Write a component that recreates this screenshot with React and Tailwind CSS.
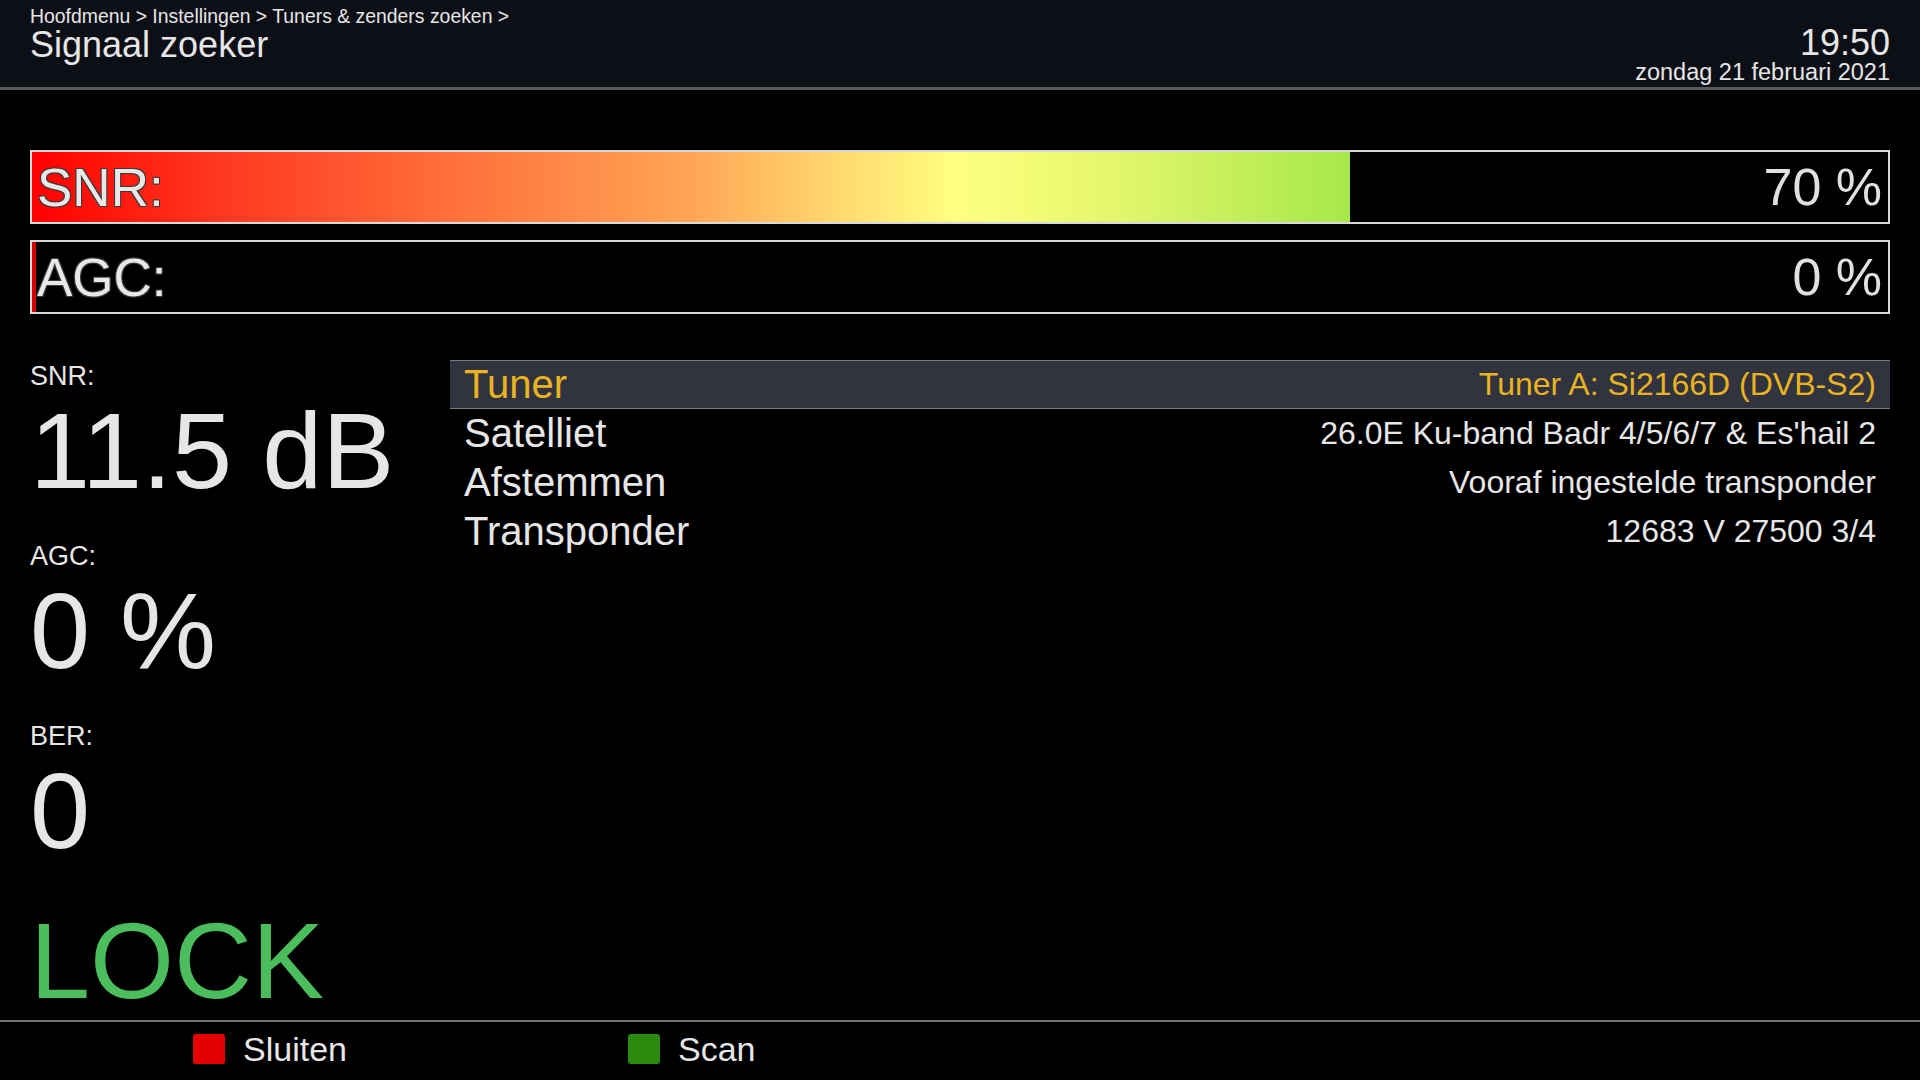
import React from 'react';

const sans = "font-['Liberation_Sans',Arial,sans-serif]";

const bars = [
  { label: 'SNR:', value: '70 %', fill: 71 },
  { label: 'AGC:', value: '0 %', fill: 0 },
];

const stats = [
  { label: 'SNR:', value: '11.5 dB' },
  { label: 'AGC:', value: '0 %' },
  { label: 'BER:', value: '0' },
];

const rows = [
  { name: 'Tuner', value: 'Tuner A: Si2166D (DVB-S2)', active: true },
  { name: 'Satelliet', value: "26.0E Ku-band Badr 4/5/6/7 & Es'hail 2" },
  { name: 'Afstemmen', value: 'Vooraf ingestelde transponder' },
  { name: 'Transponder', value: '12683 V 27500 3/4' },
];

const SignalBar = ({ label, value, fill }) => (
  <div className="relative h-[74px] border-2 border-[#d9d9d9] flex items-center justify-between">
    {fill > 0 ? (
      <div
        className="absolute left-0 top-0 bottom-0 bg-[linear-gradient(to_right,#ff0000_0%,#ff3a22_15%,#ff6a38_30%,#ffa555_50%,#ffd36c_60%,#ffff80_70%,#e4f66c_82%,#a6e84a_100%)]"
        style={{ width: `${fill}%` }}
      />
    ) : (
      <div className="absolute left-0 top-0 bottom-0 w-[4px] bg-[#d40000]" />
    )}
    <span className="relative pl-[5px] text-[53px] leading-none text-[#e8e8e8] [text-shadow:-1px_-1px_0_#3a3a3a,1px_-1px_0_#3a3a3a,-1px_1px_0_#3a3a3a,1px_1px_0_#3a3a3a]">
      {label}
    </span>
    <span className="relative pr-[6px] text-[52px] leading-none text-[#e0e0e0]">{value}</span>
  </div>
);

export default function App() {
  return (
    <div className={`w-full h-[1080px] bg-black flex flex-col overflow-hidden text-[#e6e6e6] ${sans}`}>
      <header className="h-[90px] shrink-0 bg-[#0d0f17] border-b-[3px] border-[#5a5a5e] px-[30px] flex justify-between">
        <div className="pt-[6px]">
          <div className="text-[19.4px] leading-[21px]">Hoofdmenu &gt; Instellingen &gt; Tuners &amp; zenders zoeken &gt;</div>
          <div className="text-[36px] leading-[36px]">Signaal zoeker</div>
        </div>
        <div className="pt-[27px] text-right">
          <div className="text-[36px] leading-[32px]">19:50</div>
          <div className="mt-[1px] text-[23.5px] leading-[24px]">zondag 21 februari 2021</div>
        </div>
      </header>

      <main className="flex-1 flex flex-col px-[30px] pt-[60px] overflow-hidden">
        <div className="flex flex-col gap-[16px]">
          {bars.map((b) => (
            <SignalBar key={b.label} {...b} />
          ))}
        </div>

        <div className="mt-[46px] flex">
          <div className="w-[420px] shrink-0 pt-[1px]">
            {stats.map((s, i) => (
              <div key={s.label} className={i > 0 ? 'mt-[36px]' : ''}>
                <div className="text-[27px] leading-[30px]">{s.label}</div>
                <div className="mt-[6px] text-[108px] leading-[108px]">{s.value}</div>
              </div>
            ))}
            <div className="mt-[42px] text-[108px] leading-[108px] text-[#4cbd5c]">LOCK</div>
          </div>

          <div className="flex-1">
            {rows.map((r) => (
              <div
                key={r.name}
                className={`h-[49px] flex justify-between pl-[14px] pr-[14px] ${r.active ? 'bg-[#31333f] border-y border-[#7c7c84] text-[#e9b41f]' : ''}`}
              >
                <span className={`text-[40px] leading-[47px] ${r.active ? '' : 'pt-[1px]'}`}>{r.name}</span>
                <span className={`text-[32px] leading-[47px] ${r.active ? '' : 'pt-[1px]'}`}>{r.value}</span>
              </div>
            ))}
          </div>
        </div>
      </main>

      <footer className="h-[60px] shrink-0 border-t-2 border-[#737377] flex items-start pt-[12px] pl-[193px]">
        <div className="w-[435px] flex items-start gap-[18px]">
          <span className="w-[32px] h-[30px] rounded-[3px] bg-[#e40000]" />
          <span className="text-[34px] leading-[30px]">Sluiten</span>
        </div>
        <div className="flex items-start gap-[18px]">
          <span className="w-[32px] h-[30px] rounded-[3px] bg-[#2a8a0e]" />
          <span className="text-[34px] leading-[30px]">Scan</span>
        </div>
      </footer>
    </div>
  );
}
